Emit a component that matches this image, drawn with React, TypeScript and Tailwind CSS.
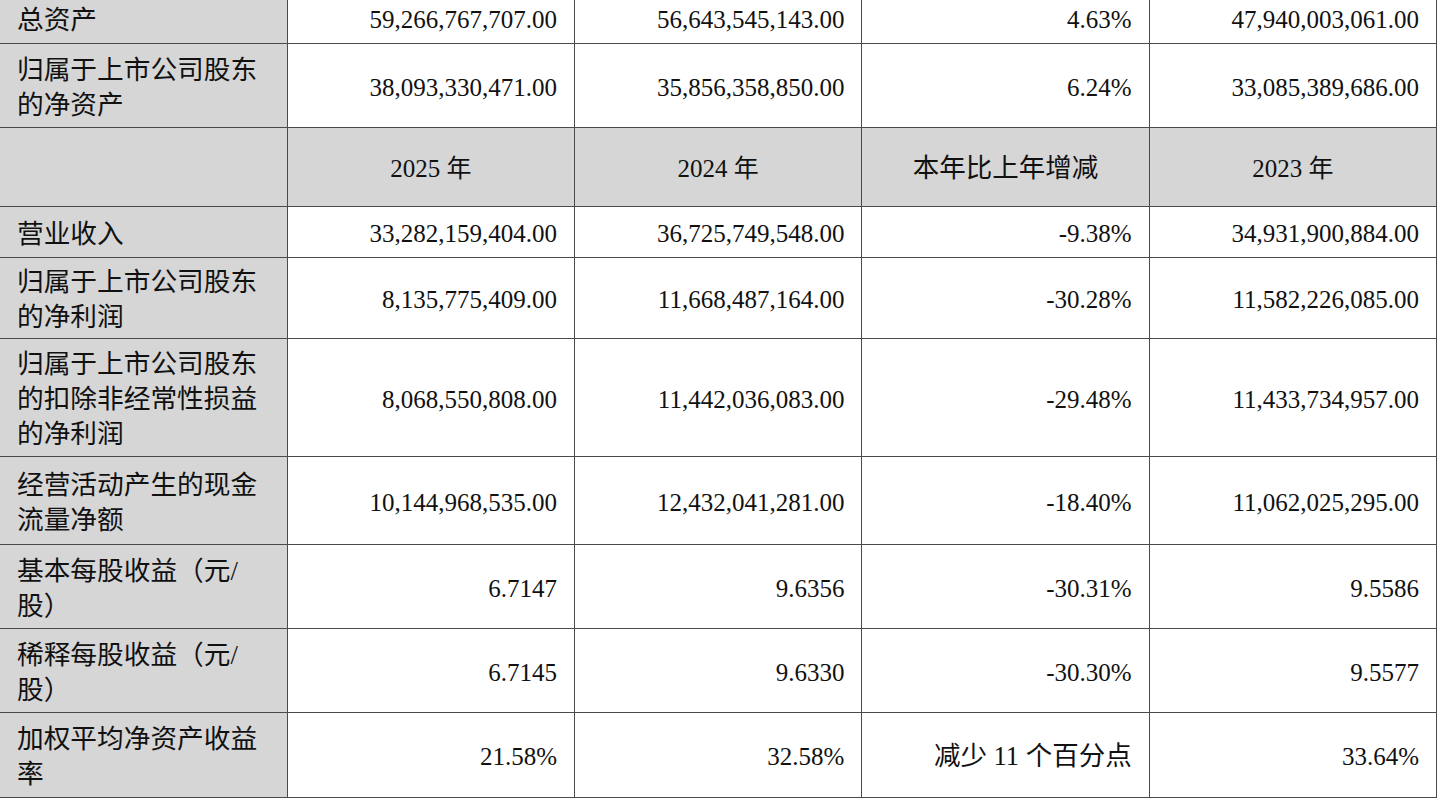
const rows: { label: string[]; values: string[]; height: string }[] = [
    { label: ["总资产"], values: ["59,266,767,707.00", "56,643,545,143.00", "4.63%", "47,940,003,061.00"], height: "h-[51px]" },
    { label: ["归属于上市公司股东", "的净资产"], values: ["38,093,330,471.00", "35,856,358,850.00", "6.24%", "33,085,389,686.00"], height: "h-[84px]" },
];

const rows2: { label: string[]; values: string[]; height: string }[] = [
    { label: ["营业收入"], values: ["33,282,159,404.00", "36,725,749,548.00", "-9.38%", "34,931,900,884.00"], height: "h-[51px]" },
    { label: ["归属于上市公司股东", "的净利润"], values: ["8,135,775,409.00", "11,668,487,164.00", "-30.28%", "11,582,226,085.00"], height: "h-[81px]" },
    { label: ["归属于上市公司股东", "的扣除非经常性损益", "的净利润"], values: ["8,068,550,808.00", "11,442,036,083.00", "-29.48%", "11,433,734,957.00"], height: "h-[118px]" },
    { label: ["经营活动产生的现金", "流量净额"], values: ["10,144,968,535.00", "12,432,041,281.00", "-18.40%", "11,062,025,295.00"], height: "h-[88px]" },
    { label: ["基本每股收益（元/", "股）"], values: ["6.7147", "9.6356", "-30.31%", "9.5586"], height: "h-[84px]" },
    { label: ["稀释每股收益（元/", "股）"], values: ["6.7145", "9.6330", "-30.30%", "9.5577"], height: "h-[84px]" },
    { label: ["加权平均净资产收益", "率"], values: ["21.58%", "32.58%", "减少 11 个百分点", "33.64%"], height: "h-[85px]" },
];

const headers = ["2025 年", "2024 年", "本年比上年增减", "2023 年"];

// CJK glyphs in the reference run a little wider than the digits
const hasCjk = (s: string) => /[\u4e00-\u9fff]/.test(s);

function DataRow({ label, values, height }: { label: string[]; values: string[]; height: string }) {
    return (
        <tr className={height}>
            <td className="border-y border-r border-[#4a4a4a] bg-[#d6d6d6] pl-[17px] pr-2 pt-[4px] align-middle text-[26.7px] leading-[35px]">
                {label.map((line, i) => (
                    <div key={i}>{line}</div>
                ))}
            </td>
            {values.map((v, i) => (
                <td
                    key={i}
                    className="border border-[#4a4a4a] pr-[17px] pt-[4px] text-right align-middle whitespace-nowrap"
                >
                    {hasCjk(v) ? <span className="text-[26.5px]">{v}</span> : v}
                </td>
            ))}
        </tr>
    );
}

export default function App() {
    return (
        <div
            className="w-[1440px] h-[804px] overflow-hidden bg-white text-[#111]"
            style={{ fontFamily: '"Liberation Serif", "Noto Sans CJK SC", serif' }}
        >
            <table className="-mt-2 w-[1437px] table-fixed border-collapse text-[25px]">
                <tbody>
                    {rows.map((r, i) => (
                        <DataRow key={i} {...r} />
                    ))}
                    <tr className="h-[79px] bg-[#d6d6d6]">
                        <td className="border-y border-r border-[#4a4a4a]" />
                        {headers.map((h) => (
                            <td key={h} className="border border-[#4a4a4a] pt-[4px] text-center align-middle">
                                {h === "本年比上年增减" ? <span className="text-[26.5px]">{h}</span> : h}
                            </td>
                        ))}
                    </tr>
                    {rows2.map((r, i) => (
                        <DataRow key={i} {...r} />
                    ))}
                </tbody>
            </table>
        </div>
    );
}
